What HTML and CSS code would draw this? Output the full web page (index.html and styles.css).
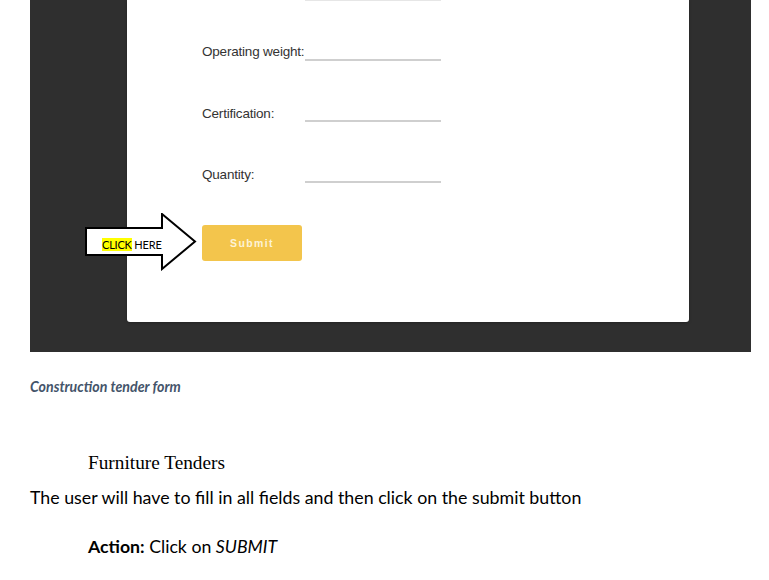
FILE: index.html
```html
<!DOCTYPE html>
<html>
<head>
<meta charset="utf-8">
<link rel="stylesheet" href="styles.css">
</head>
<body>
<div class="doc">
  <div class="panel">
    <div class="card">
      <div class="partial-line"></div>
      <div class="field first">
        <span class="label">Operating weight:</span>
        <span class="input"></span>
      </div>
      <div class="field">
        <span class="label">Certification:</span>
        <span class="input"></span>
      </div>
      <div class="field">
        <span class="label">Quantity:</span>
        <span class="input"></span>
      </div>
      <button class="submit">Submit</button>
    </div>
    <div class="callout">
      <svg class="arrow" width="114" height="58" viewBox="0 0 114 58">
        <path d="M1 15 H77 V1 L110 28.5 L77 56 V42 H1 Z" fill="#fff" stroke="#000" stroke-width="2" stroke-linejoin="miter"/>
      </svg>
      <span class="callout-text"><mark class="hl">CLICK</mark> HERE</span>
    </div>
  </div>
  <p class="caption">Construction tender form</p>
  <h2 class="heading">Furniture Tenders</h2>
  <p class="body-text">The user will have to fill in all fields and then click on the submit button</p>
  <p class="action"><b>Action:</b> Click on <i>SUBMIT</i></p>
</div>
</body>
</html>
```
FILE: styles.css
```css
html, body {
  margin: 0;
  padding: 0;
  background: #fff;
}
.doc {
  padding-left: 30px;
  width: 721px;
}
.panel {
  position: relative;
  background: #2f2f2f;
  height: 352px;
  padding-left: 97px;
  box-sizing: border-box;
}
.card {
  width: 562px;
  height: 322px;
  background: #fff;
  border-radius: 0 0 3px 3px;
  box-shadow: 0 1px 3px rgba(0,0,0,0.25);
  padding-left: 75px;
  box-sizing: border-box;
  display: flex;
  flex-direction: column;
}
.partial-line {
  width: 136px;
  margin-left: 103px;
  height: 1px;
  background: #e6e6e6;
}
.field {
  display: flex;
  align-items: flex-end;
  height: 61px;
  font-family: "Liberation Sans", Arial, sans-serif;
  font-size: 13.5px;
  color: #333;
}
.field.first {
  height: 60px;
}
.label {
  width: 103px;
  flex-shrink: 0;
  white-space: nowrap;
  line-height: 16px;
  letter-spacing: -0.2px;
}
.field.first .label {
  padding-bottom: 1px;
}
.input {
  width: 136px;
  height: 0;
  border-bottom: 2px solid #cfcfcf;
}
.submit {
  margin-top: 42px;
  width: 100px;
  height: 36px;
  background: #f3c54c;
  border: none;
  border-radius: 3px;
  color: #fdf3d6;
  font-family: "Liberation Sans", Arial, sans-serif;
  font-size: 10.5px;
  font-weight: bold;
  letter-spacing: 1.4px;
  padding: 0;
}
.callout {
  position: absolute;
  left: 55px;
  top: 213px;
  width: 114px;
  height: 58px;
}
.arrow {
  display: block;
}
.callout-text {
  position: absolute;
  left: 17px;
  top: 25px;
  font-family: Lato, "Open Sans", sans-serif;
  font-size: 11px;
  line-height: 14px;
  color: #000;
  letter-spacing: -0.2px;
}
.hl {
  background: #ffff00;
  color: #000;
}
.caption {
  margin: 26px 0 0 0;
  font-family: Lato, "Open Sans", sans-serif;
  font-size: 14.2px;
  font-weight: bold;
  font-style: italic;
  color: #44546a;
  line-height: 18px;
}
.heading {
  margin: 55px 0 0 58px;
  font-family: "Liberation Serif", "Times New Roman", serif;
  font-weight: normal;
  font-size: 19.3px;
  line-height: 24px;
  color: #000;
}
.body-text {
  margin: 11px 0 0 0;
  font-family: Lato, "Open Sans", sans-serif;
  font-size: 17.8px;
  line-height: 22px;
  color: #000;
}
.action {
  margin: 28px 0 0 58px;
  font-family: Lato, "Open Sans", sans-serif;
  font-size: 17.7px;
  line-height: 22px;
  color: #000;
}
```
